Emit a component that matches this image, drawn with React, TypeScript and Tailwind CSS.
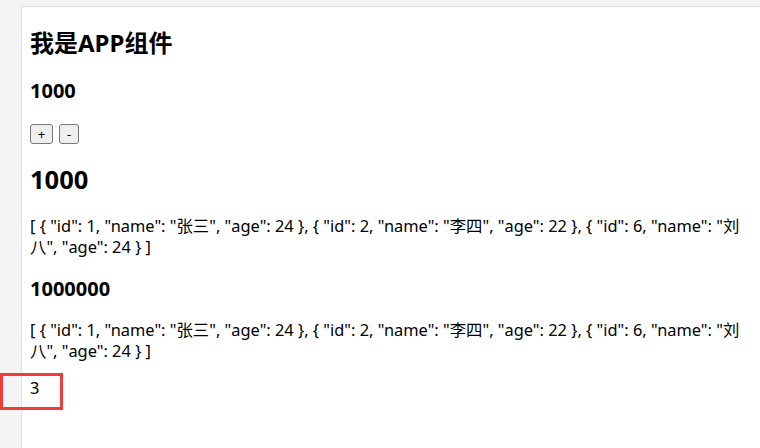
import React from "react";

const data = '[ { "id": 1, "name": "张三", "age": 24 }, { "id": 2, "name": "李四", "age": 22 }, { "id": 6, "name": "刘八", "age": 24 } ]';

export default function App() {
  return (
    <div
      className="relative w-[760px] h-[448px] overflow-hidden bg-[#f4f4f4] pt-[6px] pl-[21px] text-black"
      style={{ fontFamily: '"Noto Sans", "Noto Sans CJK SC", sans-serif' }}
    >
      <div className="h-full bg-white border-l border-t border-[#e2e2e2] pl-[8px] pr-[10px]">
        <h2 className="pt-[20px] text-[24px] font-bold leading-[32px]">我是APP组件</h2>
        <h3 className="mt-[20px] text-[20px] font-bold leading-[24px]">1000</h3>
        <div className="mt-[21px] flex gap-[6px]">
          <button className="w-[23px] h-[20px] bg-[#efefef] border border-[#767676] rounded-[3px] text-[13px] leading-none">+</button>
          <button className="w-[20px] h-[20px] bg-[#efefef] border border-[#767676] rounded-[3px] text-[13px] leading-none">-</button>
        </div>
        <h2 className="mt-[19px] text-[25.5px] font-bold leading-[32px]">1000</h2>
        <p className="mt-[20px] text-[16.4px] leading-[21px] break-all">{data}</p>
        <h3 className="mt-[20px] text-[20px] font-bold leading-[24px]">1000000</h3>
        <p className="mt-[18px] text-[16.4px] leading-[21px] break-all">{data}</p>
        <p className="mt-[16px] text-[16.4px] leading-[21px]">3</p>
      </div>
      <div className="absolute left-0 top-[373px] w-[63px] h-[37px] border-[3px] border-[#f23b3b]" />
    </div>
  );
}
